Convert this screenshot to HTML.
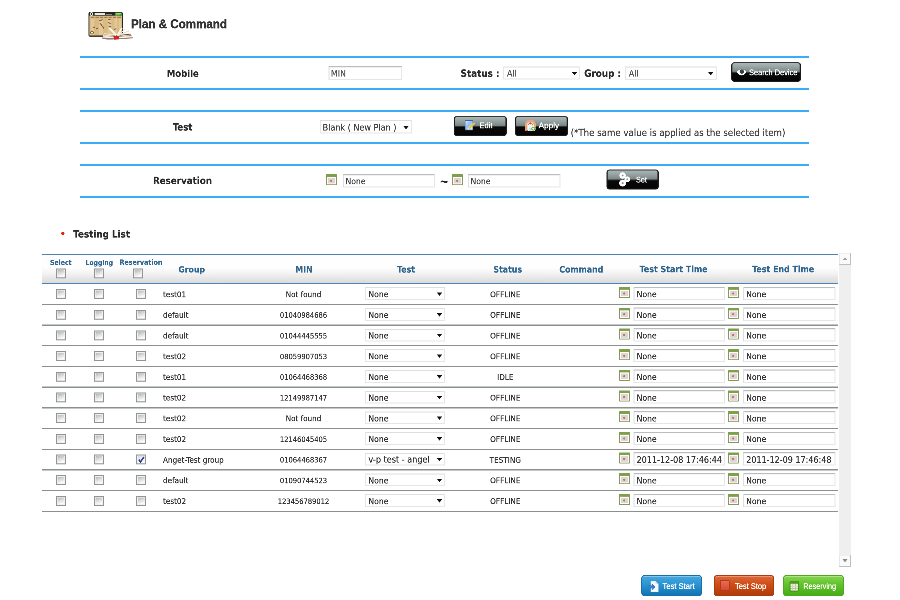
<!DOCTYPE html>
<html lang="en"><head><meta charset="utf-8"><title>Plan &amp; Command</title>
<style>
html,body{margin:0;padding:0;background:#fff;overflow:hidden;width:900px;height:600px}
#w{position:absolute;left:0;top:0;width:3600px;height:2400px;transform:scale(.25);transform-origin:0 0;
  font-family:"Liberation Sans","DejaVu Sans",sans-serif;overflow:hidden;will-change:transform}
.t{position:absolute;line-height:0;white-space:pre;-webkit-text-stroke:0.72px currentColor}
.b{-webkit-text-stroke:0.48px currentColor}
.a{position:absolute;display:block;overflow:visible}
.bl{position:absolute;left:319.6px;width:2916px;height:8.2px;background:#39aef6}
.inp{box-sizing:border-box;background:#fff;border:4px solid #e6e6e6;border-top-color:#bcbcbc;border-left-color:#dedee2;box-shadow:inset 0 2.4px 0 rgba(0,0,0,.05)}
.sel{box-sizing:border-box;background:#fff;border:4px solid #e6e6e6;border-top-color:#dedede}
.kb{box-sizing:border-box;border:4px solid #1c1c1c;border-top-color:#353535;border-radius:12px;
  background:linear-gradient(to bottom,#abb6b7 0%,#97a3a3 22%,#7d8988 47%,#3a3e3e 52%,#0a0a0a 57%,#050505 100%);
  box-shadow:inset -1.6px 0 0 rgba(20,20,20,.7),inset 1.2px 0 0 rgba(20,20,20,.5)}
.rl{position:absolute;left:168px;width:3184px;height:4.6px;background:#8a9090}
</style></head><body><div id="w">
<svg width="0" height="0" style="position:absolute"><defs>
<linearGradient id="cbg" x1="0" y1="0" x2="0.35" y2="1"><stop offset="0" stop-color="#b4b5b6"/><stop offset="0.55" stop-color="#dfdfdf"/><stop offset="1" stop-color="#fbfbfb"/></linearGradient>
<linearGradient id="cbg2" x1="0" y1="0" x2="0.35" y2="1"><stop offset="0" stop-color="#d5dbe6"/><stop offset="1" stop-color="#fdfdfd"/></linearGradient>
</defs></svg>

<svg class="a" style="left:344px;top:40px;width:200px;height:136px" viewBox="86 10 50 34">
<rect x="88.5" y="12" width="34.3" height="24.7" rx="1.5" fill="#26261f"/>
<rect x="89.4" y="15.6" width="32.6" height="19.9" fill="#d9b984"/>
<rect x="114.8" y="12.6" width="7.4" height="3" fill="#4c9a30"/>
<path d="M116.2 13.4h4.6M116.2 14.8h3.4" stroke="#9fd07a" stroke-width=".7"/>
<rect x="94.6" y="13.1" width="10.6" height="1.9" fill="#e9e9e2"/>
<rect x="105.6" y="13.9" width="6.5" height="1" fill="#8c8c84"/>
<circle cx="91.5" cy="14" r="1.35" fill="none" stroke="#f1f1ea" stroke-width=".9"/>
<g fill="#e6cb9a" opacity=".8"><rect x="90.6" y="18.6" width="3.6" height="16.6"/><rect x="99.2" y="18.6" width="3.8" height="16.6"/><rect x="107.6" y="18.6" width="3.8" height="16.6"/><rect x="114.4" y="18.6" width="3" height="16.6"/><rect x="119" y="18.6" width="2.4" height="16.6"/></g>
<g stroke="#8a6a3a" stroke-width="1" opacity=".85"><path d="M90.8 17.2h3M95.4 17.2h3.4M99.8 17.2h3.2M104.4 17.2h3M108.6 17.2h3M113 17.2h3M117.4 17.2h3.6"/></g>
<g stroke="#6b5531" stroke-width="1" stroke-linecap="round" opacity=".9"><path d="M99.6 20.6l2.6-.8M100 23.8l1.4.5M101.8 25.6l2 2.6M108.8 19.4l1.4.4M108.6 22.8l1.6.5M109 26.2l1.8.7M93.2 27.6l1.4-.5M96.4 28.8l1.4-.3M114.4 29.2l1.6-.3"/></g>
<circle cx="92" cy="32.6" r="1.4" fill="#f4ecc8" stroke="#6b5531" stroke-width=".7"/>
<path d="M104 33.2L116 34.6L116.4 37.4L102.8 37.4Z" fill="#f0e6d0"/>
<path d="M117.4 34.8L130.4 33.2L131.8 36.9L117.2 37.5Z" fill="#efe4cf"/>
<path d="M104.4 34.5L115.8 35.7M104 35.8L115.8 36.7" stroke="#b9a284" stroke-width=".5" fill="none"/>
<path d="M118 35.5L130.9 34.1" stroke="#6e5038" stroke-width=".7" fill="none"/>
<path d="M118 36.5L131.5 35.5" stroke="#a3846a" stroke-width=".6" fill="none"/>
<path d="M128.6 30.4L129.3 31.3L118.4 36.1L117.8 35.4Z" fill="#e4dfd8"/>
<path d="M108.4 28.2L110.3 27.7L117.1 35L115.5 35.8Z" fill="#fcf7ec"/>
<path d="M121.2 27.6L122.6 28.3L118.1 35.8L116.7 35Z" fill="#fefaf0"/>
<path d="M124.6 28.8L125.6 29.4L118.6 35.6L117.8 35Z" fill="#f1ebe0"/>
<path d="M102 37.5L116 38.1L132.8 37.3L132.6 38.3L116 39.5L102.4 38.7Z" fill="#8f5c5c" opacity=".85"/>
<path d="M104 39L114 39.4L110 40.4Z" fill="#8c8690" opacity=".6"/>
<path d="M113.4 36.2L119 36L118.6 39.4L114 39.7Z" fill="#cc2a20"/>
</svg>
<div class="t b" style="top:96.16px;font-size:49.2px;color:#333;font-weight:bold;left:524.4px;transform:scaleX(0.943);transform-origin:0 50%;-webkit-text-stroke:1.4px #333;">Plan &amp; Command</div>
<div class="bl" style="top:224px"></div>
<div class="bl" style="top:352.6px"></div>
<div class="bl" style="top:439.8px"></div>
<div class="bl" style="top:568px"></div>
<div class="bl" style="top:655px"></div>
<div class="bl" style="top:784.4px"></div>
<div class="t b" style="top:293.72px;font-size:37.8px;color:#2b2b2b;font-weight:bold;font-family:'DejaVu Sans',sans-serif;font-stretch:condensed;left:331.2px;width:800px;text-align:center;">Mobile</div>
<div class="inp" style="position:absolute;left:1313.6px;top:265.2px;width:294.4px;height:53.6px;"></div>
<div class="t" style="top:294.2px;font-size:35.2px;color:#555;font-family:'DejaVu Sans',sans-serif;font-stretch:condensed;left:1323.6px;">MIN</div>
<div class="t b" style="top:294.4px;font-size:39.2px;color:#2b2b2b;font-weight:bold;font-family:'DejaVu Sans',sans-serif;font-stretch:condensed;left:1842.4px;">Status :</div>
<div class="sel" style="position:absolute;left:2012.8px;top:266px;width:308.4px;height:52.4px;"></div>
<div class="t" style="top:294.2px;font-size:35.2px;color:#555;font-family:'DejaVu Sans',sans-serif;font-stretch:condensed;left:2028px;">All</div>
<svg class="a" style="left:2285.6px;top:287.8px;width:24px;height:13.2px" viewBox="0 0 10 6"><path d="M0 0H10L5 6Z" fill="#111"/></svg>
<div class="t b" style="top:294.4px;font-size:39.2px;color:#2b2b2b;font-weight:bold;font-family:'DejaVu Sans',sans-serif;font-stretch:condensed;left:2336.8px;">Group :</div>
<div class="sel" style="position:absolute;left:2501.2px;top:265.6px;width:365.6px;height:53.2px;"></div>
<div class="t" style="top:294.2px;font-size:35.2px;color:#555;font-family:'DejaVu Sans',sans-serif;font-stretch:condensed;left:2515.2px;">All</div>
<svg class="a" style="left:2831.2px;top:288.2px;width:24px;height:13.2px" viewBox="0 0 10 6"><path d="M0 0H10L5 6Z" fill="#111"/></svg>
<div class="kb" style="position:absolute;left:2925.2px;top:249.2px;width:278.8px;height:78px;"></div>
<svg class="a" style="left:2940px;top:268px;width:52px;height:40px" viewBox="735 67 13 10">
<path d="M736.8 71.9C738.2 70.2 739.9 69.5 741.6 69.5C743.4 69.5 745.1 70.3 746.4 71.9C745.1 74.2 743.4 75.4 741.6 75.4C739.8 75.4 738.1 74.2 736.8 71.9Z" fill="#fff"/>
<circle cx="741.8" cy="71.6" r="2.15" fill="#3a3f3f"/></svg>
<div class="t" style="top:289.84px;font-size:32.8px;color:#fff;left:2996px;transform:scaleX(0.908);transform-origin:0 50%;-webkit-text-stroke:0;text-shadow:0 0 2.2px #fff,0 0 1.2px #fff;">Search Device</div>
<div class="t b" style="top:509.48px;font-size:38.4px;color:#2b2b2b;font-weight:bold;font-family:'DejaVu Sans',sans-serif;font-stretch:condensed;left:330.4px;width:800px;text-align:center;">Test</div>
<div class="sel" style="position:absolute;left:1278.8px;top:480px;width:368px;height:53.6px;"></div>
<div class="t" style="top:509.56px;font-size:35.88px;color:#444;font-family:'DejaVu Sans',sans-serif;font-stretch:condensed;left:1290.4px;">Blank ( New Plan )</div>
<svg class="a" style="left:1612px;top:503.8px;width:24px;height:13.2px" viewBox="0 0 10 6"><path d="M0 0H10L5 6Z" fill="#111"/></svg>
<div class="kb" style="position:absolute;left:1814.8px;top:464px;width:212px;height:80px;"></div>
<svg class="a" style="left:1857.6px;top:480px;width:42px;height:44px" viewBox="0 0 10.5 11">
<defs><linearGradient id="pg" x1="0" y1="0" x2="1" y2="1"><stop offset="0" stop-color="#e4eefc"/><stop offset=".45" stop-color="#8fc0f0"/><stop offset="1" stop-color="#f4f8ff"/></linearGradient></defs>
<rect x="0.6" y="0.6" width="7.8" height="9.4" rx="0.6" fill="url(#pg)" stroke="#3b5fae" stroke-width=".7"/>
<path d="M3.2 9.8L3.8 7.8L8.6 3L10 4.4L5.2 9.2Z" fill="#f2c62e"/>
<path d="M8.6 3L9.3 2.4L10.4 3.6L10 4.4Z" fill="#f3c9a0"/>
<path d="M3.2 9.8L3.8 7.8L5.2 9.2Z" fill="#f6dcb4"/></svg>
<div class="t" style="top:502.24px;font-size:32.8px;color:#fff;left:1918.4px;transform:scaleX(0.916);transform-origin:0 50%;-webkit-text-stroke:0;text-shadow:0 0 2.2px #fff,0 0 1.2px #fff;">Edit</div>
<div class="kb" style="position:absolute;left:2060px;top:464px;width:212px;height:80px;"></div>
<svg class="a" style="left:2097.6px;top:477.6px;width:48px;height:48px" viewBox="0 0 12 12">
<path d="M1.2 11.2V6.2C1.2 3 3.2 1.1 5.9 1.1C8.6 1.1 10.6 3 10.6 6.2V8" fill="none" stroke="#eea57a" stroke-width="1.9"/>
<path d="M2.7 11V6.4C2.7 4.2 4.1 2.9 5.9 2.9C7.7 2.9 9.1 4.2 9.1 6.4V7" fill="none" stroke="#f9dcc2" stroke-width="1.1"/>
<path d="M3.4 11.4V7.6C3.4 5.6 4.4 4.4 5.9 4.4C7.4 4.4 8.4 5.6 8.4 7.6V11.4Z" fill="#f4f4f0"/>
<circle cx="5.8" cy="3.9" r="1.05" fill="#d8453a"/>
<path d="M4.4 11.4V8.2H7.2V11.4Z" fill="#cfe0f2"/>
<circle cx="8.7" cy="9.2" r="2.2" fill="#58b63c" stroke="#e8f5e0" stroke-width=".5"/>
<path d="M7.6 9.2H9.8M8.7 8.1V10.3" stroke="#fff" stroke-width=".8"/></svg>
<div class="t" style="top:502.24px;font-size:32.8px;color:#fff;left:2154.4px;transform:scaleX(1.0);transform-origin:0 50%;-webkit-text-stroke:0;text-shadow:0 0 2.2px #fff,0 0 1.2px #fff;">Apply</div>
<div class="t" style="top:530.72px;font-size:38.36px;color:#444;font-family:'DejaVu Sans',sans-serif;font-stretch:condensed;left:2282.8px;">(*The same value is applied as the selected item)</div>
<div class="t b" style="top:723.36px;font-size:38.8px;color:#2b2b2b;font-weight:bold;font-family:'DejaVu Sans',sans-serif;font-stretch:condensed;left:330px;width:800px;text-align:center;">Reservation</div>
<svg class="a" style="left:1303.6px;top:696.8px;width:44px;height:44px" viewBox="0 0 11 11"><rect x="0.45" y="0.45" width="10.1" height="10.1" rx="0.5" fill="#fdfdfb" stroke="#86965c" stroke-width="0.9"/><rect x="0.1" y="0" width="10.8" height="2.7" rx="0.6" fill="#7fa04a"/><rect x="2.1" y="3.8" width="7" height="5.4" fill="#ddd4d6"/><circle cx="5.2" cy="6.5" r="1.05" fill="#c9705a"/></svg>
<div class="inp" style="position:absolute;left:1372px;top:696.8px;width:366.8px;height:53.2px;"></div>
<div class="t" style="top:724.96px;font-size:34.2px;color:#444;font-family:'DejaVu Sans',sans-serif;font-stretch:condensed;left:1382px;">None</div>
<div class="t b" style="top:725.6px;font-size:52px;color:#222;font-weight:bold;left:1761.2px;-webkit-text-stroke:1px #222;">~</div>
<svg class="a" style="left:1807.6px;top:696.8px;width:44px;height:44px" viewBox="0 0 11 11"><rect x="0.45" y="0.45" width="10.1" height="10.1" rx="0.5" fill="#fdfdfb" stroke="#86965c" stroke-width="0.9"/><rect x="0.1" y="0" width="10.8" height="2.7" rx="0.6" fill="#7fa04a"/><rect x="2.1" y="3.8" width="7" height="5.4" fill="#ddd4d6"/><circle cx="5.2" cy="6.5" r="1.05" fill="#c9705a"/></svg>
<div class="inp" style="position:absolute;left:1872px;top:696.8px;width:370px;height:53.2px;"></div>
<div class="t" style="top:724.96px;font-size:34.2px;color:#444;font-family:'DejaVu Sans',sans-serif;font-stretch:condensed;left:1882px;">None</div>
<div class="kb" style="position:absolute;left:2426.4px;top:677.6px;width:208.8px;height:80.4px;"></div>
<svg class="a" style="left:2472px;top:686px;width:56px;height:64px" viewBox="618 171.5 14 16">
<g fill="#fff"><circle cx="622.6" cy="175.5" r="3.2"/><circle cx="627.3" cy="179.3" r="2.85"/><circle cx="622.6" cy="183.1" r="3.4"/></g>
<g fill="#9a8f8f"><circle cx="622.6" cy="175.5" r="0.95"/><circle cx="627.3" cy="179.3" r="0.85"/><circle cx="622.6" cy="183.1" r="1"/></g></svg>
<div class="t" style="top:718.64px;font-size:32.8px;color:#fff;left:2543.6px;transform:scaleX(0.886);transform-origin:0 50%;-webkit-text-stroke:0;text-shadow:0 0 2.2px #fff,0 0 1.2px #fff;">Set</div>
<div style="position:absolute;left:245.2px;top:927.2px;width:12.8px;height:12.8px;border-radius:50%;background:#e3210f"></div>
<div class="t b" style="top:937.28px;font-size:39.04px;color:#2b2b2b;font-weight:bold;font-family:'DejaVu Sans',sans-serif;font-stretch:condensed;left:293.2px;">Testing List</div>
<div class="" style="position:absolute;left:168px;top:1019.6px;width:3184px;height:114px;background:linear-gradient(to bottom,#fff 0%,#fefefe 45%,#f3f3f3 65%,#e6e6e6 83%,#d9d9d9 100%)"></div>
<div class="" style="position:absolute;left:168px;top:1015.8px;width:3184px;height:4.2px;background:#4b83b3"></div>
<div class="" style="position:absolute;left:168px;top:1131px;width:3184px;height:4.8px;background:#4a84b8"></div>
<div class="t b" style="top:1050.48px;font-size:27.52px;color:#30668f;font-weight:bold;font-family:'DejaVu Sans',sans-serif;font-stretch:condensed;left:-156.8px;width:800px;text-align:center;">Select</div>
<div class="t b" style="top:1050.64px;font-size:27px;color:#30668f;font-weight:bold;font-family:'DejaVu Sans',sans-serif;font-stretch:condensed;left:-2.8px;width:800px;text-align:center;">Logging</div>
<div class="t b" style="top:1050.24px;font-size:28.16px;color:#30668f;font-weight:bold;font-family:'DejaVu Sans',sans-serif;font-stretch:condensed;left:164px;width:800px;text-align:center;">Reservation</div>
<svg class="a" style="left:224px;top:1074.4px;width:39.6px;height:39.6px" viewBox="0 0 10 10"><rect x="0.5" y="0.5" width="9" height="9" fill="#f1f1f1" stroke="#929394" stroke-width="1"/><rect x="1.6" y="1.6" width="6.8" height="6.8" fill="url(#cbg)"/></svg>
<svg class="a" style="left:376px;top:1074.4px;width:39.6px;height:39.6px" viewBox="0 0 10 10"><rect x="0.5" y="0.5" width="9" height="9" fill="#f1f1f1" stroke="#929394" stroke-width="1"/><rect x="1.6" y="1.6" width="6.8" height="6.8" fill="url(#cbg)"/></svg>
<svg class="a" style="left:532px;top:1074.4px;width:39.6px;height:39.6px" viewBox="0 0 10 10"><rect x="0.5" y="0.5" width="9" height="9" fill="#f1f1f1" stroke="#929394" stroke-width="1"/><rect x="1.6" y="1.6" width="6.8" height="6.8" fill="url(#cbg)"/></svg>
<div class="t b" style="top:1077.64px;font-size:34.48px;color:#30668f;font-weight:bold;font-family:'DejaVu Sans',sans-serif;font-stretch:condensed;left:366.8px;width:800px;text-align:center;">Group</div>
<div class="t b" style="top:1077.56px;font-size:34.8px;color:#30668f;font-weight:bold;font-family:'DejaVu Sans',sans-serif;font-stretch:condensed;left:816px;width:800px;text-align:center;">MIN</div>
<div class="t b" style="top:1077.56px;font-size:34.8px;color:#30668f;font-weight:bold;font-family:'DejaVu Sans',sans-serif;font-stretch:condensed;left:1224px;width:800px;text-align:center;">Test</div>
<div class="t b" style="top:1077.56px;font-size:34.8px;color:#30668f;font-weight:bold;font-family:'DejaVu Sans',sans-serif;font-stretch:condensed;left:1630.8px;width:800px;text-align:center;">Status</div>
<div class="t b" style="top:1077.52px;font-size:34.88px;color:#30668f;font-weight:bold;font-family:'DejaVu Sans',sans-serif;font-stretch:condensed;left:1925.2px;width:800px;text-align:center;">Command</div>
<div class="t b" style="top:1077.36px;font-size:35.28px;color:#30668f;font-weight:bold;font-family:'DejaVu Sans',sans-serif;font-stretch:condensed;left:2294.4px;width:800px;text-align:center;">Test Start Time</div>
<div class="t b" style="top:1077.4px;font-size:35.16px;color:#30668f;font-weight:bold;font-family:'DejaVu Sans',sans-serif;font-stretch:condensed;left:2732.8px;width:800px;text-align:center;">Test End Time</div>
<svg class="a" style="left:224px;top:1156.4px;width:39.6px;height:39.6px" viewBox="0 0 10 10"><rect x="0.5" y="0.5" width="9" height="9" fill="#f1f1f1" stroke="#929394" stroke-width="1"/><rect x="1.6" y="1.6" width="6.8" height="6.8" fill="url(#cbg)"/></svg>
<svg class="a" style="left:376px;top:1156.4px;width:39.6px;height:39.6px" viewBox="0 0 10 10"><rect x="0.5" y="0.5" width="9" height="9" fill="#f1f1f1" stroke="#929394" stroke-width="1"/><rect x="1.6" y="1.6" width="6.8" height="6.8" fill="url(#cbg)"/></svg>
<svg class="a" style="left:544.8px;top:1156.4px;width:39.6px;height:39.6px" viewBox="0 0 10 10"><rect x="0.5" y="0.5" width="9" height="9" fill="#f1f1f1" stroke="#929394" stroke-width="1"/><rect x="1.6" y="1.6" width="6.8" height="6.8" fill="url(#cbg)"/></svg>
<div class="t" style="top:1177.64px;font-size:32.2px;color:#333;font-family:'DejaVu Sans',sans-serif;font-stretch:condensed;left:652px;">test01</div>
<div class="t" style="top:1177.72px;font-size:32px;color:#333;font-family:'DejaVu Sans',sans-serif;font-stretch:condensed;left:814px;width:800px;text-align:center;">Not found</div>
<div class="sel" style="position:absolute;left:1461.2px;top:1149.2px;width:320px;height:51.2px;"></div>
<div class="t" style="top:1176.96px;font-size:34.2px;color:#333;font-family:'DejaVu Sans',sans-serif;font-stretch:condensed;left:1473.6px;">None</div>
<svg class="a" style="left:1746px;top:1169.8px;width:24px;height:13.2px" viewBox="0 0 10 6"><path d="M0 0H10L5 6Z" fill="#111"/></svg>
<div class="t" style="top:1177.56px;font-size:32.4px;color:#333;font-family:'DejaVu Sans',sans-serif;font-stretch:condensed;left:1621.2px;width:800px;text-align:center;">OFFLINE</div>
<svg class="a" style="left:2475.6px;top:1148.4px;width:44px;height:44px" viewBox="0 0 11 11"><rect x="0.45" y="0.45" width="10.1" height="10.1" rx="0.5" fill="#fdfdfb" stroke="#86965c" stroke-width="0.9"/><rect x="0.1" y="0" width="10.8" height="2.7" rx="0.6" fill="#7fa04a"/><rect x="2.1" y="3.8" width="7" height="5.4" fill="#ddd4d6"/><circle cx="5.2" cy="6.5" r="1.05" fill="#c9705a"/></svg>
<div class="inp" style="position:absolute;left:2534.4px;top:1147.2px;width:366.8px;height:53.2px;"></div>
<div class="t" style="top:1176.96px;font-size:34.2px;color:#333;font-family:'DejaVu Sans',sans-serif;font-stretch:condensed;left:2546.4px;">None</div>
<svg class="a" style="left:2912.4px;top:1148.4px;width:44px;height:44px" viewBox="0 0 11 11"><rect x="0.45" y="0.45" width="10.1" height="10.1" rx="0.5" fill="#fdfdfb" stroke="#86965c" stroke-width="0.9"/><rect x="0.1" y="0" width="10.8" height="2.7" rx="0.6" fill="#7fa04a"/><rect x="2.1" y="3.8" width="7" height="5.4" fill="#ddd4d6"/><circle cx="5.2" cy="6.5" r="1.05" fill="#c9705a"/></svg>
<div class="inp" style="position:absolute;left:2973.2px;top:1147.2px;width:369.2px;height:53.2px;"></div>
<div class="t" style="top:1176.96px;font-size:34.2px;color:#333;font-family:'DejaVu Sans',sans-serif;font-stretch:condensed;left:2984.8px;">None</div>
<div class="rl" style="top:1215.24px"></div>
<svg class="a" style="left:224px;top:1239.16px;width:39.6px;height:39.6px" viewBox="0 0 10 10"><rect x="0.5" y="0.5" width="9" height="9" fill="#f1f1f1" stroke="#929394" stroke-width="1"/><rect x="1.6" y="1.6" width="6.8" height="6.8" fill="url(#cbg)"/></svg>
<svg class="a" style="left:376px;top:1239.16px;width:39.6px;height:39.6px" viewBox="0 0 10 10"><rect x="0.5" y="0.5" width="9" height="9" fill="#f1f1f1" stroke="#929394" stroke-width="1"/><rect x="1.6" y="1.6" width="6.8" height="6.8" fill="url(#cbg)"/></svg>
<svg class="a" style="left:544.8px;top:1239.16px;width:39.6px;height:39.6px" viewBox="0 0 10 10"><rect x="0.5" y="0.5" width="9" height="9" fill="#f1f1f1" stroke="#929394" stroke-width="1"/><rect x="1.6" y="1.6" width="6.8" height="6.8" fill="url(#cbg)"/></svg>
<div class="t" style="top:1260.4px;font-size:32.2px;color:#333;font-family:'DejaVu Sans',sans-serif;font-stretch:condensed;left:652px;">default</div>
<div class="t" style="top:1261.16px;font-size:30px;color:#333;font-family:'DejaVu Sans',sans-serif;font-stretch:condensed;left:814px;width:800px;text-align:center;">01040984686</div>
<div class="sel" style="position:absolute;left:1461.2px;top:1231.96px;width:320px;height:51.2px;"></div>
<div class="t" style="top:1259.72px;font-size:34.2px;color:#333;font-family:'DejaVu Sans',sans-serif;font-stretch:condensed;left:1473.6px;">None</div>
<svg class="a" style="left:1746px;top:1252.56px;width:24px;height:13.2px" viewBox="0 0 10 6"><path d="M0 0H10L5 6Z" fill="#111"/></svg>
<div class="t" style="top:1260.32px;font-size:32.4px;color:#333;font-family:'DejaVu Sans',sans-serif;font-stretch:condensed;left:1621.2px;width:800px;text-align:center;">OFFLINE</div>
<svg class="a" style="left:2475.6px;top:1231.16px;width:44px;height:44px" viewBox="0 0 11 11"><rect x="0.45" y="0.45" width="10.1" height="10.1" rx="0.5" fill="#fdfdfb" stroke="#86965c" stroke-width="0.9"/><rect x="0.1" y="0" width="10.8" height="2.7" rx="0.6" fill="#7fa04a"/><rect x="2.1" y="3.8" width="7" height="5.4" fill="#ddd4d6"/><circle cx="5.2" cy="6.5" r="1.05" fill="#c9705a"/></svg>
<div class="inp" style="position:absolute;left:2534.4px;top:1229.96px;width:366.8px;height:53.2px;"></div>
<div class="t" style="top:1259.72px;font-size:34.2px;color:#333;font-family:'DejaVu Sans',sans-serif;font-stretch:condensed;left:2546.4px;">None</div>
<svg class="a" style="left:2912.4px;top:1231.16px;width:44px;height:44px" viewBox="0 0 11 11"><rect x="0.45" y="0.45" width="10.1" height="10.1" rx="0.5" fill="#fdfdfb" stroke="#86965c" stroke-width="0.9"/><rect x="0.1" y="0" width="10.8" height="2.7" rx="0.6" fill="#7fa04a"/><rect x="2.1" y="3.8" width="7" height="5.4" fill="#ddd4d6"/><circle cx="5.2" cy="6.5" r="1.05" fill="#c9705a"/></svg>
<div class="inp" style="position:absolute;left:2973.2px;top:1229.96px;width:369.2px;height:53.2px;"></div>
<div class="t" style="top:1259.72px;font-size:34.2px;color:#333;font-family:'DejaVu Sans',sans-serif;font-stretch:condensed;left:2984.8px;">None</div>
<div class="rl" style="top:1298px"></div>
<svg class="a" style="left:224px;top:1321.92px;width:39.6px;height:39.6px" viewBox="0 0 10 10"><rect x="0.5" y="0.5" width="9" height="9" fill="#f1f1f1" stroke="#929394" stroke-width="1"/><rect x="1.6" y="1.6" width="6.8" height="6.8" fill="url(#cbg)"/></svg>
<svg class="a" style="left:376px;top:1321.92px;width:39.6px;height:39.6px" viewBox="0 0 10 10"><rect x="0.5" y="0.5" width="9" height="9" fill="#f1f1f1" stroke="#929394" stroke-width="1"/><rect x="1.6" y="1.6" width="6.8" height="6.8" fill="url(#cbg)"/></svg>
<svg class="a" style="left:544.8px;top:1321.92px;width:39.6px;height:39.6px" viewBox="0 0 10 10"><rect x="0.5" y="0.5" width="9" height="9" fill="#f1f1f1" stroke="#929394" stroke-width="1"/><rect x="1.6" y="1.6" width="6.8" height="6.8" fill="url(#cbg)"/></svg>
<div class="t" style="top:1343.16px;font-size:32.2px;color:#333;font-family:'DejaVu Sans',sans-serif;font-stretch:condensed;left:652px;">default</div>
<div class="t" style="top:1343.92px;font-size:30px;color:#333;font-family:'DejaVu Sans',sans-serif;font-stretch:condensed;left:814px;width:800px;text-align:center;">01044445555</div>
<div class="sel" style="position:absolute;left:1461.2px;top:1314.72px;width:320px;height:51.2px;"></div>
<div class="t" style="top:1342.48px;font-size:34.2px;color:#333;font-family:'DejaVu Sans',sans-serif;font-stretch:condensed;left:1473.6px;">None</div>
<svg class="a" style="left:1746px;top:1335.32px;width:24px;height:13.2px" viewBox="0 0 10 6"><path d="M0 0H10L5 6Z" fill="#111"/></svg>
<div class="t" style="top:1343.08px;font-size:32.4px;color:#333;font-family:'DejaVu Sans',sans-serif;font-stretch:condensed;left:1621.2px;width:800px;text-align:center;">OFFLINE</div>
<svg class="a" style="left:2475.6px;top:1313.92px;width:44px;height:44px" viewBox="0 0 11 11"><rect x="0.45" y="0.45" width="10.1" height="10.1" rx="0.5" fill="#fdfdfb" stroke="#86965c" stroke-width="0.9"/><rect x="0.1" y="0" width="10.8" height="2.7" rx="0.6" fill="#7fa04a"/><rect x="2.1" y="3.8" width="7" height="5.4" fill="#ddd4d6"/><circle cx="5.2" cy="6.5" r="1.05" fill="#c9705a"/></svg>
<div class="inp" style="position:absolute;left:2534.4px;top:1312.72px;width:366.8px;height:53.2px;"></div>
<div class="t" style="top:1342.48px;font-size:34.2px;color:#333;font-family:'DejaVu Sans',sans-serif;font-stretch:condensed;left:2546.4px;">None</div>
<svg class="a" style="left:2912.4px;top:1313.92px;width:44px;height:44px" viewBox="0 0 11 11"><rect x="0.45" y="0.45" width="10.1" height="10.1" rx="0.5" fill="#fdfdfb" stroke="#86965c" stroke-width="0.9"/><rect x="0.1" y="0" width="10.8" height="2.7" rx="0.6" fill="#7fa04a"/><rect x="2.1" y="3.8" width="7" height="5.4" fill="#ddd4d6"/><circle cx="5.2" cy="6.5" r="1.05" fill="#c9705a"/></svg>
<div class="inp" style="position:absolute;left:2973.2px;top:1312.72px;width:369.2px;height:53.2px;"></div>
<div class="t" style="top:1342.48px;font-size:34.2px;color:#333;font-family:'DejaVu Sans',sans-serif;font-stretch:condensed;left:2984.8px;">None</div>
<div class="rl" style="top:1380.76px"></div>
<svg class="a" style="left:224px;top:1404.68px;width:39.6px;height:39.6px" viewBox="0 0 10 10"><rect x="0.5" y="0.5" width="9" height="9" fill="#f1f1f1" stroke="#929394" stroke-width="1"/><rect x="1.6" y="1.6" width="6.8" height="6.8" fill="url(#cbg)"/></svg>
<svg class="a" style="left:376px;top:1404.68px;width:39.6px;height:39.6px" viewBox="0 0 10 10"><rect x="0.5" y="0.5" width="9" height="9" fill="#f1f1f1" stroke="#929394" stroke-width="1"/><rect x="1.6" y="1.6" width="6.8" height="6.8" fill="url(#cbg)"/></svg>
<svg class="a" style="left:544.8px;top:1404.68px;width:39.6px;height:39.6px" viewBox="0 0 10 10"><rect x="0.5" y="0.5" width="9" height="9" fill="#f1f1f1" stroke="#929394" stroke-width="1"/><rect x="1.6" y="1.6" width="6.8" height="6.8" fill="url(#cbg)"/></svg>
<div class="t" style="top:1425.92px;font-size:32.2px;color:#333;font-family:'DejaVu Sans',sans-serif;font-stretch:condensed;left:652px;">test02</div>
<div class="t" style="top:1426.68px;font-size:30px;color:#333;font-family:'DejaVu Sans',sans-serif;font-stretch:condensed;left:814px;width:800px;text-align:center;">08059907053</div>
<div class="sel" style="position:absolute;left:1461.2px;top:1397.48px;width:320px;height:51.2px;"></div>
<div class="t" style="top:1425.24px;font-size:34.2px;color:#333;font-family:'DejaVu Sans',sans-serif;font-stretch:condensed;left:1473.6px;">None</div>
<svg class="a" style="left:1746px;top:1418.08px;width:24px;height:13.2px" viewBox="0 0 10 6"><path d="M0 0H10L5 6Z" fill="#111"/></svg>
<div class="t" style="top:1425.84px;font-size:32.4px;color:#333;font-family:'DejaVu Sans',sans-serif;font-stretch:condensed;left:1621.2px;width:800px;text-align:center;">OFFLINE</div>
<svg class="a" style="left:2475.6px;top:1396.68px;width:44px;height:44px" viewBox="0 0 11 11"><rect x="0.45" y="0.45" width="10.1" height="10.1" rx="0.5" fill="#fdfdfb" stroke="#86965c" stroke-width="0.9"/><rect x="0.1" y="0" width="10.8" height="2.7" rx="0.6" fill="#7fa04a"/><rect x="2.1" y="3.8" width="7" height="5.4" fill="#ddd4d6"/><circle cx="5.2" cy="6.5" r="1.05" fill="#c9705a"/></svg>
<div class="inp" style="position:absolute;left:2534.4px;top:1395.48px;width:366.8px;height:53.2px;"></div>
<div class="t" style="top:1425.24px;font-size:34.2px;color:#333;font-family:'DejaVu Sans',sans-serif;font-stretch:condensed;left:2546.4px;">None</div>
<svg class="a" style="left:2912.4px;top:1396.68px;width:44px;height:44px" viewBox="0 0 11 11"><rect x="0.45" y="0.45" width="10.1" height="10.1" rx="0.5" fill="#fdfdfb" stroke="#86965c" stroke-width="0.9"/><rect x="0.1" y="0" width="10.8" height="2.7" rx="0.6" fill="#7fa04a"/><rect x="2.1" y="3.8" width="7" height="5.4" fill="#ddd4d6"/><circle cx="5.2" cy="6.5" r="1.05" fill="#c9705a"/></svg>
<div class="inp" style="position:absolute;left:2973.2px;top:1395.48px;width:369.2px;height:53.2px;"></div>
<div class="t" style="top:1425.24px;font-size:34.2px;color:#333;font-family:'DejaVu Sans',sans-serif;font-stretch:condensed;left:2984.8px;">None</div>
<div class="rl" style="top:1463.52px"></div>
<svg class="a" style="left:224px;top:1487.44px;width:39.6px;height:39.6px" viewBox="0 0 10 10"><rect x="0.5" y="0.5" width="9" height="9" fill="#f1f1f1" stroke="#929394" stroke-width="1"/><rect x="1.6" y="1.6" width="6.8" height="6.8" fill="url(#cbg)"/></svg>
<svg class="a" style="left:376px;top:1487.44px;width:39.6px;height:39.6px" viewBox="0 0 10 10"><rect x="0.5" y="0.5" width="9" height="9" fill="#f1f1f1" stroke="#929394" stroke-width="1"/><rect x="1.6" y="1.6" width="6.8" height="6.8" fill="url(#cbg)"/></svg>
<svg class="a" style="left:544.8px;top:1487.44px;width:39.6px;height:39.6px" viewBox="0 0 10 10"><rect x="0.5" y="0.5" width="9" height="9" fill="#f1f1f1" stroke="#929394" stroke-width="1"/><rect x="1.6" y="1.6" width="6.8" height="6.8" fill="url(#cbg)"/></svg>
<div class="t" style="top:1508.68px;font-size:32.2px;color:#333;font-family:'DejaVu Sans',sans-serif;font-stretch:condensed;left:652px;">test01</div>
<div class="t" style="top:1509.44px;font-size:30px;color:#333;font-family:'DejaVu Sans',sans-serif;font-stretch:condensed;left:814px;width:800px;text-align:center;">01064468368</div>
<div class="sel" style="position:absolute;left:1461.2px;top:1480.24px;width:320px;height:51.2px;"></div>
<div class="t" style="top:1508px;font-size:34.2px;color:#333;font-family:'DejaVu Sans',sans-serif;font-stretch:condensed;left:1473.6px;">None</div>
<svg class="a" style="left:1746px;top:1500.84px;width:24px;height:13.2px" viewBox="0 0 10 6"><path d="M0 0H10L5 6Z" fill="#111"/></svg>
<div class="t" style="top:1508.6px;font-size:32.4px;color:#333;font-family:'DejaVu Sans',sans-serif;font-stretch:condensed;left:1621.2px;width:800px;text-align:center;">IDLE</div>
<svg class="a" style="left:2475.6px;top:1479.44px;width:44px;height:44px" viewBox="0 0 11 11"><rect x="0.45" y="0.45" width="10.1" height="10.1" rx="0.5" fill="#fdfdfb" stroke="#86965c" stroke-width="0.9"/><rect x="0.1" y="0" width="10.8" height="2.7" rx="0.6" fill="#7fa04a"/><rect x="2.1" y="3.8" width="7" height="5.4" fill="#ddd4d6"/><circle cx="5.2" cy="6.5" r="1.05" fill="#c9705a"/></svg>
<div class="inp" style="position:absolute;left:2534.4px;top:1478.24px;width:366.8px;height:53.2px;"></div>
<div class="t" style="top:1508px;font-size:34.2px;color:#333;font-family:'DejaVu Sans',sans-serif;font-stretch:condensed;left:2546.4px;">None</div>
<svg class="a" style="left:2912.4px;top:1479.44px;width:44px;height:44px" viewBox="0 0 11 11"><rect x="0.45" y="0.45" width="10.1" height="10.1" rx="0.5" fill="#fdfdfb" stroke="#86965c" stroke-width="0.9"/><rect x="0.1" y="0" width="10.8" height="2.7" rx="0.6" fill="#7fa04a"/><rect x="2.1" y="3.8" width="7" height="5.4" fill="#ddd4d6"/><circle cx="5.2" cy="6.5" r="1.05" fill="#c9705a"/></svg>
<div class="inp" style="position:absolute;left:2973.2px;top:1478.24px;width:369.2px;height:53.2px;"></div>
<div class="t" style="top:1508px;font-size:34.2px;color:#333;font-family:'DejaVu Sans',sans-serif;font-stretch:condensed;left:2984.8px;">None</div>
<div class="rl" style="top:1546.28px"></div>
<svg class="a" style="left:224px;top:1570.2px;width:39.6px;height:39.6px" viewBox="0 0 10 10"><rect x="0.5" y="0.5" width="9" height="9" fill="#f1f1f1" stroke="#929394" stroke-width="1"/><rect x="1.6" y="1.6" width="6.8" height="6.8" fill="url(#cbg)"/></svg>
<svg class="a" style="left:376px;top:1570.2px;width:39.6px;height:39.6px" viewBox="0 0 10 10"><rect x="0.5" y="0.5" width="9" height="9" fill="#f1f1f1" stroke="#929394" stroke-width="1"/><rect x="1.6" y="1.6" width="6.8" height="6.8" fill="url(#cbg)"/></svg>
<svg class="a" style="left:544.8px;top:1570.2px;width:39.6px;height:39.6px" viewBox="0 0 10 10"><rect x="0.5" y="0.5" width="9" height="9" fill="#f1f1f1" stroke="#929394" stroke-width="1"/><rect x="1.6" y="1.6" width="6.8" height="6.8" fill="url(#cbg)"/></svg>
<div class="t" style="top:1591.44px;font-size:32.2px;color:#333;font-family:'DejaVu Sans',sans-serif;font-stretch:condensed;left:652px;">test02</div>
<div class="t" style="top:1592.2px;font-size:30px;color:#333;font-family:'DejaVu Sans',sans-serif;font-stretch:condensed;left:814px;width:800px;text-align:center;">12149987147</div>
<div class="sel" style="position:absolute;left:1461.2px;top:1563px;width:320px;height:51.2px;"></div>
<div class="t" style="top:1590.76px;font-size:34.2px;color:#333;font-family:'DejaVu Sans',sans-serif;font-stretch:condensed;left:1473.6px;">None</div>
<svg class="a" style="left:1746px;top:1583.6px;width:24px;height:13.2px" viewBox="0 0 10 6"><path d="M0 0H10L5 6Z" fill="#111"/></svg>
<div class="t" style="top:1591.36px;font-size:32.4px;color:#333;font-family:'DejaVu Sans',sans-serif;font-stretch:condensed;left:1621.2px;width:800px;text-align:center;">OFFLINE</div>
<svg class="a" style="left:2475.6px;top:1562.2px;width:44px;height:44px" viewBox="0 0 11 11"><rect x="0.45" y="0.45" width="10.1" height="10.1" rx="0.5" fill="#fdfdfb" stroke="#86965c" stroke-width="0.9"/><rect x="0.1" y="0" width="10.8" height="2.7" rx="0.6" fill="#7fa04a"/><rect x="2.1" y="3.8" width="7" height="5.4" fill="#ddd4d6"/><circle cx="5.2" cy="6.5" r="1.05" fill="#c9705a"/></svg>
<div class="inp" style="position:absolute;left:2534.4px;top:1561px;width:366.8px;height:53.2px;"></div>
<div class="t" style="top:1590.76px;font-size:34.2px;color:#333;font-family:'DejaVu Sans',sans-serif;font-stretch:condensed;left:2546.4px;">None</div>
<svg class="a" style="left:2912.4px;top:1562.2px;width:44px;height:44px" viewBox="0 0 11 11"><rect x="0.45" y="0.45" width="10.1" height="10.1" rx="0.5" fill="#fdfdfb" stroke="#86965c" stroke-width="0.9"/><rect x="0.1" y="0" width="10.8" height="2.7" rx="0.6" fill="#7fa04a"/><rect x="2.1" y="3.8" width="7" height="5.4" fill="#ddd4d6"/><circle cx="5.2" cy="6.5" r="1.05" fill="#c9705a"/></svg>
<div class="inp" style="position:absolute;left:2973.2px;top:1561px;width:369.2px;height:53.2px;"></div>
<div class="t" style="top:1590.76px;font-size:34.2px;color:#333;font-family:'DejaVu Sans',sans-serif;font-stretch:condensed;left:2984.8px;">None</div>
<div class="rl" style="top:1629.04px"></div>
<svg class="a" style="left:224px;top:1652.96px;width:39.6px;height:39.6px" viewBox="0 0 10 10"><rect x="0.5" y="0.5" width="9" height="9" fill="#f1f1f1" stroke="#929394" stroke-width="1"/><rect x="1.6" y="1.6" width="6.8" height="6.8" fill="url(#cbg)"/></svg>
<svg class="a" style="left:376px;top:1652.96px;width:39.6px;height:39.6px" viewBox="0 0 10 10"><rect x="0.5" y="0.5" width="9" height="9" fill="#f1f1f1" stroke="#929394" stroke-width="1"/><rect x="1.6" y="1.6" width="6.8" height="6.8" fill="url(#cbg)"/></svg>
<svg class="a" style="left:544.8px;top:1652.96px;width:39.6px;height:39.6px" viewBox="0 0 10 10"><rect x="0.5" y="0.5" width="9" height="9" fill="#f1f1f1" stroke="#929394" stroke-width="1"/><rect x="1.6" y="1.6" width="6.8" height="6.8" fill="url(#cbg)"/></svg>
<div class="t" style="top:1674.2px;font-size:32.2px;color:#333;font-family:'DejaVu Sans',sans-serif;font-stretch:condensed;left:652px;">test02</div>
<div class="t" style="top:1674.28px;font-size:32px;color:#333;font-family:'DejaVu Sans',sans-serif;font-stretch:condensed;left:814px;width:800px;text-align:center;">Not found</div>
<div class="sel" style="position:absolute;left:1461.2px;top:1645.76px;width:320px;height:51.2px;"></div>
<div class="t" style="top:1673.52px;font-size:34.2px;color:#333;font-family:'DejaVu Sans',sans-serif;font-stretch:condensed;left:1473.6px;">None</div>
<svg class="a" style="left:1746px;top:1666.36px;width:24px;height:13.2px" viewBox="0 0 10 6"><path d="M0 0H10L5 6Z" fill="#111"/></svg>
<div class="t" style="top:1674.12px;font-size:32.4px;color:#333;font-family:'DejaVu Sans',sans-serif;font-stretch:condensed;left:1621.2px;width:800px;text-align:center;">OFFLINE</div>
<svg class="a" style="left:2475.6px;top:1644.96px;width:44px;height:44px" viewBox="0 0 11 11"><rect x="0.45" y="0.45" width="10.1" height="10.1" rx="0.5" fill="#fdfdfb" stroke="#86965c" stroke-width="0.9"/><rect x="0.1" y="0" width="10.8" height="2.7" rx="0.6" fill="#7fa04a"/><rect x="2.1" y="3.8" width="7" height="5.4" fill="#ddd4d6"/><circle cx="5.2" cy="6.5" r="1.05" fill="#c9705a"/></svg>
<div class="inp" style="position:absolute;left:2534.4px;top:1643.76px;width:366.8px;height:53.2px;"></div>
<div class="t" style="top:1673.52px;font-size:34.2px;color:#333;font-family:'DejaVu Sans',sans-serif;font-stretch:condensed;left:2546.4px;">None</div>
<svg class="a" style="left:2912.4px;top:1644.96px;width:44px;height:44px" viewBox="0 0 11 11"><rect x="0.45" y="0.45" width="10.1" height="10.1" rx="0.5" fill="#fdfdfb" stroke="#86965c" stroke-width="0.9"/><rect x="0.1" y="0" width="10.8" height="2.7" rx="0.6" fill="#7fa04a"/><rect x="2.1" y="3.8" width="7" height="5.4" fill="#ddd4d6"/><circle cx="5.2" cy="6.5" r="1.05" fill="#c9705a"/></svg>
<div class="inp" style="position:absolute;left:2973.2px;top:1643.76px;width:369.2px;height:53.2px;"></div>
<div class="t" style="top:1673.52px;font-size:34.2px;color:#333;font-family:'DejaVu Sans',sans-serif;font-stretch:condensed;left:2984.8px;">None</div>
<div class="rl" style="top:1711.8px"></div>
<svg class="a" style="left:224px;top:1735.72px;width:39.6px;height:39.6px" viewBox="0 0 10 10"><rect x="0.5" y="0.5" width="9" height="9" fill="#f1f1f1" stroke="#929394" stroke-width="1"/><rect x="1.6" y="1.6" width="6.8" height="6.8" fill="url(#cbg)"/></svg>
<svg class="a" style="left:376px;top:1735.72px;width:39.6px;height:39.6px" viewBox="0 0 10 10"><rect x="0.5" y="0.5" width="9" height="9" fill="#f1f1f1" stroke="#929394" stroke-width="1"/><rect x="1.6" y="1.6" width="6.8" height="6.8" fill="url(#cbg)"/></svg>
<svg class="a" style="left:544.8px;top:1735.72px;width:39.6px;height:39.6px" viewBox="0 0 10 10"><rect x="0.5" y="0.5" width="9" height="9" fill="#f1f1f1" stroke="#929394" stroke-width="1"/><rect x="1.6" y="1.6" width="6.8" height="6.8" fill="url(#cbg)"/></svg>
<div class="t" style="top:1756.96px;font-size:32.2px;color:#333;font-family:'DejaVu Sans',sans-serif;font-stretch:condensed;left:652px;">test02</div>
<div class="t" style="top:1757.72px;font-size:30px;color:#333;font-family:'DejaVu Sans',sans-serif;font-stretch:condensed;left:814px;width:800px;text-align:center;">12146045405</div>
<div class="sel" style="position:absolute;left:1461.2px;top:1728.52px;width:320px;height:51.2px;"></div>
<div class="t" style="top:1756.28px;font-size:34.2px;color:#333;font-family:'DejaVu Sans',sans-serif;font-stretch:condensed;left:1473.6px;">None</div>
<svg class="a" style="left:1746px;top:1749.12px;width:24px;height:13.2px" viewBox="0 0 10 6"><path d="M0 0H10L5 6Z" fill="#111"/></svg>
<div class="t" style="top:1756.88px;font-size:32.4px;color:#333;font-family:'DejaVu Sans',sans-serif;font-stretch:condensed;left:1621.2px;width:800px;text-align:center;">OFFLINE</div>
<svg class="a" style="left:2475.6px;top:1727.72px;width:44px;height:44px" viewBox="0 0 11 11"><rect x="0.45" y="0.45" width="10.1" height="10.1" rx="0.5" fill="#fdfdfb" stroke="#86965c" stroke-width="0.9"/><rect x="0.1" y="0" width="10.8" height="2.7" rx="0.6" fill="#7fa04a"/><rect x="2.1" y="3.8" width="7" height="5.4" fill="#ddd4d6"/><circle cx="5.2" cy="6.5" r="1.05" fill="#c9705a"/></svg>
<div class="inp" style="position:absolute;left:2534.4px;top:1726.52px;width:366.8px;height:53.2px;"></div>
<div class="t" style="top:1756.28px;font-size:34.2px;color:#333;font-family:'DejaVu Sans',sans-serif;font-stretch:condensed;left:2546.4px;">None</div>
<svg class="a" style="left:2912.4px;top:1727.72px;width:44px;height:44px" viewBox="0 0 11 11"><rect x="0.45" y="0.45" width="10.1" height="10.1" rx="0.5" fill="#fdfdfb" stroke="#86965c" stroke-width="0.9"/><rect x="0.1" y="0" width="10.8" height="2.7" rx="0.6" fill="#7fa04a"/><rect x="2.1" y="3.8" width="7" height="5.4" fill="#ddd4d6"/><circle cx="5.2" cy="6.5" r="1.05" fill="#c9705a"/></svg>
<div class="inp" style="position:absolute;left:2973.2px;top:1726.52px;width:369.2px;height:53.2px;"></div>
<div class="t" style="top:1756.28px;font-size:34.2px;color:#333;font-family:'DejaVu Sans',sans-serif;font-stretch:condensed;left:2984.8px;">None</div>
<div class="rl" style="top:1794.56px"></div>
<svg class="a" style="left:224px;top:1818.48px;width:39.6px;height:39.6px" viewBox="0 0 10 10"><rect x="0.5" y="0.5" width="9" height="9" fill="#f1f1f1" stroke="#929394" stroke-width="1"/><rect x="1.6" y="1.6" width="6.8" height="6.8" fill="url(#cbg)"/></svg>
<svg class="a" style="left:376px;top:1818.48px;width:39.6px;height:39.6px" viewBox="0 0 10 10"><rect x="0.5" y="0.5" width="9" height="9" fill="#f1f1f1" stroke="#929394" stroke-width="1"/><rect x="1.6" y="1.6" width="6.8" height="6.8" fill="url(#cbg)"/></svg>
<svg class="a" style="left:544.8px;top:1818.48px;width:39.6px;height:39.6px" viewBox="0 0 10 10"><rect x="0.5" y="0.5" width="9" height="9" fill="#f1f1f1" stroke="#929394" stroke-width="1"/><rect x="1.6" y="1.6" width="6.8" height="6.8" fill="url(#cbg2)"/><path d="M2.5 5.1L4.3 7.5L7.7 2.5" fill="none" stroke="#2b3a8c" stroke-width="1.5"/></svg>
<div class="t" style="top:1839.72px;font-size:32.2px;color:#333;font-family:'DejaVu Sans',sans-serif;font-stretch:condensed;left:652px;">Anget-Test group</div>
<div class="t" style="top:1840.48px;font-size:30px;color:#333;font-family:'DejaVu Sans',sans-serif;font-stretch:condensed;left:814px;width:800px;text-align:center;">01064468367</div>
<div class="sel" style="position:absolute;left:1461.2px;top:1811.28px;width:320px;height:51.2px;"></div>
<div class="t" style="top:1838.4px;font-size:36px;color:#333;font-family:'DejaVu Sans',sans-serif;font-stretch:condensed;left:1473.6px;">v-p test - angel</div>
<svg class="a" style="left:1746px;top:1831.88px;width:24px;height:13.2px" viewBox="0 0 10 6"><path d="M0 0H10L5 6Z" fill="#111"/></svg>
<div class="t" style="top:1839.64px;font-size:32.4px;color:#333;font-family:'DejaVu Sans',sans-serif;font-stretch:condensed;left:1621.2px;width:800px;text-align:center;">TESTING</div>
<svg class="a" style="left:2475.6px;top:1810.48px;width:44px;height:44px" viewBox="0 0 11 11"><rect x="0.45" y="0.45" width="10.1" height="10.1" rx="0.5" fill="#fdfdfb" stroke="#86965c" stroke-width="0.9"/><rect x="0.1" y="0" width="10.8" height="2.7" rx="0.6" fill="#7fa04a"/><rect x="2.1" y="3.8" width="7" height="5.4" fill="#ddd4d6"/><circle cx="5.2" cy="6.5" r="1.05" fill="#c9705a"/></svg>
<div class="inp" style="position:absolute;left:2534.4px;top:1809.28px;width:366.8px;height:53.2px;"></div>
<div class="t" style="top:1838.52px;font-size:35.72px;color:#333;font-family:'DejaVu Sans',sans-serif;font-stretch:condensed;left:2546.4px;">2011-12-08 17:46:44</div>
<svg class="a" style="left:2912.4px;top:1810.48px;width:44px;height:44px" viewBox="0 0 11 11"><rect x="0.45" y="0.45" width="10.1" height="10.1" rx="0.5" fill="#fdfdfb" stroke="#86965c" stroke-width="0.9"/><rect x="0.1" y="0" width="10.8" height="2.7" rx="0.6" fill="#7fa04a"/><rect x="2.1" y="3.8" width="7" height="5.4" fill="#ddd4d6"/><circle cx="5.2" cy="6.5" r="1.05" fill="#c9705a"/></svg>
<div class="inp" style="position:absolute;left:2973.2px;top:1809.28px;width:369.2px;height:53.2px;"></div>
<div class="t" style="top:1838.52px;font-size:35.72px;color:#333;font-family:'DejaVu Sans',sans-serif;font-stretch:condensed;left:2984.8px;">2011-12-09 17:46:48</div>
<div class="rl" style="top:1877.32px"></div>
<svg class="a" style="left:224px;top:1901.24px;width:39.6px;height:39.6px" viewBox="0 0 10 10"><rect x="0.5" y="0.5" width="9" height="9" fill="#f1f1f1" stroke="#929394" stroke-width="1"/><rect x="1.6" y="1.6" width="6.8" height="6.8" fill="url(#cbg)"/></svg>
<svg class="a" style="left:376px;top:1901.24px;width:39.6px;height:39.6px" viewBox="0 0 10 10"><rect x="0.5" y="0.5" width="9" height="9" fill="#f1f1f1" stroke="#929394" stroke-width="1"/><rect x="1.6" y="1.6" width="6.8" height="6.8" fill="url(#cbg)"/></svg>
<svg class="a" style="left:544.8px;top:1901.24px;width:39.6px;height:39.6px" viewBox="0 0 10 10"><rect x="0.5" y="0.5" width="9" height="9" fill="#f1f1f1" stroke="#929394" stroke-width="1"/><rect x="1.6" y="1.6" width="6.8" height="6.8" fill="url(#cbg)"/></svg>
<div class="t" style="top:1922.48px;font-size:32.2px;color:#333;font-family:'DejaVu Sans',sans-serif;font-stretch:condensed;left:652px;">default</div>
<div class="t" style="top:1923.24px;font-size:30px;color:#333;font-family:'DejaVu Sans',sans-serif;font-stretch:condensed;left:814px;width:800px;text-align:center;">01090744523</div>
<div class="sel" style="position:absolute;left:1461.2px;top:1894.04px;width:320px;height:51.2px;"></div>
<div class="t" style="top:1921.8px;font-size:34.2px;color:#333;font-family:'DejaVu Sans',sans-serif;font-stretch:condensed;left:1473.6px;">None</div>
<svg class="a" style="left:1746px;top:1914.64px;width:24px;height:13.2px" viewBox="0 0 10 6"><path d="M0 0H10L5 6Z" fill="#111"/></svg>
<div class="t" style="top:1922.4px;font-size:32.4px;color:#333;font-family:'DejaVu Sans',sans-serif;font-stretch:condensed;left:1621.2px;width:800px;text-align:center;">OFFLINE</div>
<svg class="a" style="left:2475.6px;top:1893.24px;width:44px;height:44px" viewBox="0 0 11 11"><rect x="0.45" y="0.45" width="10.1" height="10.1" rx="0.5" fill="#fdfdfb" stroke="#86965c" stroke-width="0.9"/><rect x="0.1" y="0" width="10.8" height="2.7" rx="0.6" fill="#7fa04a"/><rect x="2.1" y="3.8" width="7" height="5.4" fill="#ddd4d6"/><circle cx="5.2" cy="6.5" r="1.05" fill="#c9705a"/></svg>
<div class="inp" style="position:absolute;left:2534.4px;top:1892.04px;width:366.8px;height:53.2px;"></div>
<div class="t" style="top:1921.8px;font-size:34.2px;color:#333;font-family:'DejaVu Sans',sans-serif;font-stretch:condensed;left:2546.4px;">None</div>
<svg class="a" style="left:2912.4px;top:1893.24px;width:44px;height:44px" viewBox="0 0 11 11"><rect x="0.45" y="0.45" width="10.1" height="10.1" rx="0.5" fill="#fdfdfb" stroke="#86965c" stroke-width="0.9"/><rect x="0.1" y="0" width="10.8" height="2.7" rx="0.6" fill="#7fa04a"/><rect x="2.1" y="3.8" width="7" height="5.4" fill="#ddd4d6"/><circle cx="5.2" cy="6.5" r="1.05" fill="#c9705a"/></svg>
<div class="inp" style="position:absolute;left:2973.2px;top:1892.04px;width:369.2px;height:53.2px;"></div>
<div class="t" style="top:1921.8px;font-size:34.2px;color:#333;font-family:'DejaVu Sans',sans-serif;font-stretch:condensed;left:2984.8px;">None</div>
<div class="rl" style="top:1960.08px"></div>
<svg class="a" style="left:224px;top:1984px;width:39.6px;height:39.6px" viewBox="0 0 10 10"><rect x="0.5" y="0.5" width="9" height="9" fill="#f1f1f1" stroke="#929394" stroke-width="1"/><rect x="1.6" y="1.6" width="6.8" height="6.8" fill="url(#cbg)"/></svg>
<svg class="a" style="left:376px;top:1984px;width:39.6px;height:39.6px" viewBox="0 0 10 10"><rect x="0.5" y="0.5" width="9" height="9" fill="#f1f1f1" stroke="#929394" stroke-width="1"/><rect x="1.6" y="1.6" width="6.8" height="6.8" fill="url(#cbg)"/></svg>
<svg class="a" style="left:544.8px;top:1984px;width:39.6px;height:39.6px" viewBox="0 0 10 10"><rect x="0.5" y="0.5" width="9" height="9" fill="#f1f1f1" stroke="#929394" stroke-width="1"/><rect x="1.6" y="1.6" width="6.8" height="6.8" fill="url(#cbg)"/></svg>
<div class="t" style="top:2005.24px;font-size:32.2px;color:#333;font-family:'DejaVu Sans',sans-serif;font-stretch:condensed;left:652px;">test02</div>
<div class="t" style="top:2006px;font-size:30px;color:#333;font-family:'DejaVu Sans',sans-serif;font-stretch:condensed;left:814px;width:800px;text-align:center;">123456789012</div>
<div class="sel" style="position:absolute;left:1461.2px;top:1976.8px;width:320px;height:51.2px;"></div>
<div class="t" style="top:2004.56px;font-size:34.2px;color:#333;font-family:'DejaVu Sans',sans-serif;font-stretch:condensed;left:1473.6px;">None</div>
<svg class="a" style="left:1746px;top:1997.4px;width:24px;height:13.2px" viewBox="0 0 10 6"><path d="M0 0H10L5 6Z" fill="#111"/></svg>
<div class="t" style="top:2005.16px;font-size:32.4px;color:#333;font-family:'DejaVu Sans',sans-serif;font-stretch:condensed;left:1621.2px;width:800px;text-align:center;">OFFLINE</div>
<svg class="a" style="left:2475.6px;top:1976px;width:44px;height:44px" viewBox="0 0 11 11"><rect x="0.45" y="0.45" width="10.1" height="10.1" rx="0.5" fill="#fdfdfb" stroke="#86965c" stroke-width="0.9"/><rect x="0.1" y="0" width="10.8" height="2.7" rx="0.6" fill="#7fa04a"/><rect x="2.1" y="3.8" width="7" height="5.4" fill="#ddd4d6"/><circle cx="5.2" cy="6.5" r="1.05" fill="#c9705a"/></svg>
<div class="inp" style="position:absolute;left:2534.4px;top:1974.8px;width:366.8px;height:53.2px;"></div>
<div class="t" style="top:2004.56px;font-size:34.2px;color:#333;font-family:'DejaVu Sans',sans-serif;font-stretch:condensed;left:2546.4px;">None</div>
<svg class="a" style="left:2912.4px;top:1976px;width:44px;height:44px" viewBox="0 0 11 11"><rect x="0.45" y="0.45" width="10.1" height="10.1" rx="0.5" fill="#fdfdfb" stroke="#86965c" stroke-width="0.9"/><rect x="0.1" y="0" width="10.8" height="2.7" rx="0.6" fill="#7fa04a"/><rect x="2.1" y="3.8" width="7" height="5.4" fill="#ddd4d6"/><circle cx="5.2" cy="6.5" r="1.05" fill="#c9705a"/></svg>
<div class="inp" style="position:absolute;left:2973.2px;top:1974.8px;width:369.2px;height:53.2px;"></div>
<div class="t" style="top:2004.56px;font-size:34.2px;color:#333;font-family:'DejaVu Sans',sans-serif;font-stretch:condensed;left:2984.8px;">None</div>
<div class="rl" style="top:2042.84px"></div>
<div class="" style="position:absolute;left:3356.8px;top:1012px;width:46.4px;height:1254.8px;background:#efefef"></div>
<div class="" style="position:absolute;left:3356.8px;top:1012px;width:46.4px;height:47.2px;background:#fafafa;box-sizing:border-box;border-right:4px solid #bebebe;border-bottom:4px solid #bebebe;border-left:2px solid #e6e6e6;border-top:2px solid #e6e6e6"></div>
<svg class="a" style="left:3369.6px;top:1028.8px;width:20px;height:12px" viewBox="0 0 10 6"><path d="M0 6H10L5 0Z" fill="#a2a2a2"/></svg>
<div class="" style="position:absolute;left:3356.8px;top:2220px;width:46.4px;height:46.8px;background:#fafafa;box-sizing:border-box;border-right:4px solid #bebebe;border-bottom:4px solid #bebebe;border-left:2px solid #e6e6e6;border-top:2px solid #e6e6e6"></div>
<svg class="a" style="left:3369.6px;top:2236.8px;width:20px;height:12px" viewBox="0 0 10 6"><path d="M0 0H10L5 6Z" fill="#8a8a8a"/></svg>
<div class="" style="position:absolute;left:2565.2px;top:2300px;width:242.8px;height:85.2px;box-sizing:border-box;border-radius:14px;border:4px solid #1b6fa6;background:linear-gradient(to bottom,#46a9e0 0%,#2b94d2 45%,#0f74b6 100%);box-shadow:inset 0 3.2px 0 rgba(255,255,255,.35)"></div>
<svg class="a" style="left:2594.4px;top:2321.6px;width:41.6px;height:48px" viewBox="0 0 10.4 12">
<path d="M2.4 0.6H7L9.8 3.4V11.4H2.4Z" fill="#f6f9fc" stroke="#c9d6e4" stroke-width="0.5"/>
<path d="M7 0.6V3.4H9.8Z" fill="#cfdbe8"/>
<path d="M0.4 5.2H3.4V3.4L6.6 6.4L3.4 9.4V7.6H0.4Z" fill="#3d7fd6" stroke="#2a5fae" stroke-width="0.4"/></svg>
<div class="t" style="top:2345.44px;font-size:32.8px;color:#fff;left:2650.4px;transform:scaleX(0.928);transform-origin:0 50%;-webkit-text-stroke:0;text-shadow:0 0 2.2px #fff,0 0 1.2px #fff;">Test Start</div>
<div class="" style="position:absolute;left:2854.8px;top:2300px;width:242px;height:85.2px;box-sizing:border-box;border-radius:14px;border:4px solid #a83c12;background:linear-gradient(to bottom,#de6a38 0%,#cf4c16 45%,#b13a08 100%);box-shadow:inset 0 3.2px 0 rgba(255,255,255,.3)"></div>
<div class="" style="position:absolute;left:2879.2px;top:2321.2px;width:39.6px;height:44px;box-sizing:border-box;border:4px solid #b03a20;border-radius:4px;background:linear-gradient(to bottom,#ea6a52,#d94a34)"></div>
<div class="t" style="top:2345.44px;font-size:32.8px;color:#fff;left:2940.4px;transform:scaleX(0.913);transform-origin:0 50%;-webkit-text-stroke:0;text-shadow:0 0 2.2px #fff,0 0 1.2px #fff;">Test Stop</div>
<div class="" style="position:absolute;left:3132px;top:2300px;width:244px;height:84.8px;box-sizing:border-box;border-radius:14px;border:4px solid #4fa524;background:linear-gradient(to bottom,#86d64e 0%,#62c22c 45%,#46ae16 100%);box-shadow:inset 0 3.2px 0 rgba(255,255,255,.35)"></div>
<svg class="a" style="left:3157.6px;top:2323.2px;width:37.6px;height:43.2px" viewBox="0 0 9.4 10.8">
<rect x="0.5" y="0.5" width="8.4" height="9.8" rx="1" fill="#e9edd2" stroke="#3f8f1c" stroke-width="1"/>
<rect x="0.5" y="0.5" width="8.4" height="2.4" fill="#4b9a24"/>
<path d="M3.3 3V10M6.1 3V10M1 5.4H8.4M1 7.8H8.4" stroke="#b9c7a0" stroke-width="0.6"/></svg>
<div class="t" style="top:2345.04px;font-size:32.8px;color:#fff;left:3213.2px;transform:scaleX(0.889);transform-origin:0 50%;-webkit-text-stroke:0;text-shadow:0 0 2.2px #fff,0 0 1.2px #fff;">Reserving</div>
</div></body></html>
